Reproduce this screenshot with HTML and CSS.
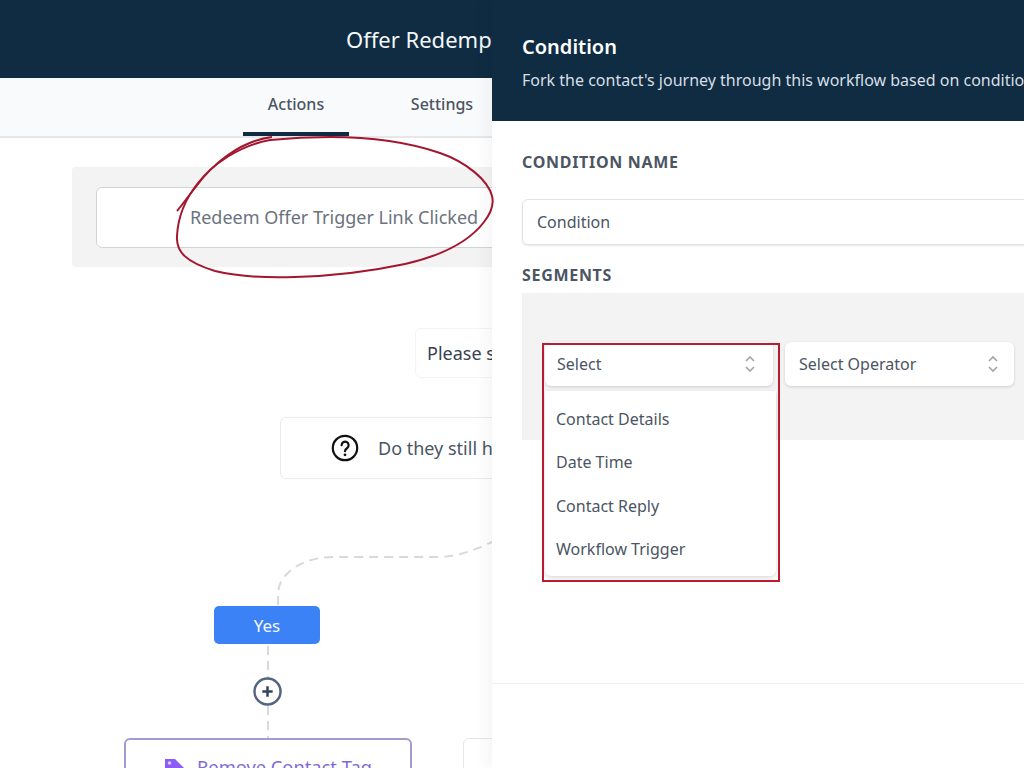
FILE: index.html
```html
<!DOCTYPE html>
<html lang="en">
<head>
<meta charset="utf-8">
<title>Offer Redemption Workflow</title>
<link rel="stylesheet" href="styles.css">
</head>
<body>
<div class="stage">
  <main class="builder">
    <header class="topbar"><h1 class="topbar-title">Offer Redemption Workflow</h1></header>
    <nav class="tabs">
      <a class="tab tab-active">Actions</a>
      <a class="tab">Settings</a>
    </nav>
    <section class="canvas">
      <div class="trigger-zone">
        <div class="trigger-card">Redeem Offer Trigger Link Clicked</div>
      </div>
      <div class="node node-wait">Please select a wait step</div>
      <div class="node node-question">
        <svg class="q-icon" viewBox="0 0 28 28" aria-hidden="true"><circle cx="14" cy="14" r="12.2" fill="none" stroke="#111" stroke-width="2.2"/><path d="M10.600 11.200a3.500 3.500 0 1 1 5.600 2.800c-1.400 1-2.200 1.600-2.200 3.200" fill="none" stroke="#111" stroke-width="2.2" stroke-linecap="round"/><circle cx="14" cy="20.800" r="1.400" fill="#111"/></svg>
        <span>Do they still have the offer available?</span>
      </div>
      <svg class="wires" viewBox="0 0 1024 768" aria-hidden="true">
        <path d="M278 605v-12c1-8 3-14 10-20c10-10 26-16 46-16h105c22-1 38-8 53-15" />
        <path d="M268 646v32M268 706v32" />
      </svg>
      <button class="yes-btn">Yes</button>
      <button class="add-btn" aria-label="Add action">
        <svg viewBox="0 0 28 28" aria-hidden="true"><circle cx="14" cy="14" r="12.6" fill="#fff" stroke="#52667f" stroke-width="2.4"/><path d="M14 9v10M9 14h10" stroke="#33455c" stroke-width="2.4"/></svg>
      </button>
      <div class="node node-action">
        <svg class="tag-icon" viewBox="0 0 22 22" aria-hidden="true"><path d="M0 1h10l12 12-8 8L0 10z" fill="#8b5cf6"/><circle cx="4.500" cy="5" r="1.800" fill="#d9ccfb"/></svg>
        <span>Remove Contact Tag</span>
      </div>
      <div class="node node-ghost"></div>
    </section>
  </main>

  <aside class="panel">
    <header class="panel-head">
      <h2 class="panel-title">Condition</h2>
      <p class="panel-sub">Fork the contact's journey through this workflow based on conditions you define.</p>
    </header>
    <div class="panel-body">
      <h3 class="field-label">CONDITION NAME</h3>
      <div class="text-input">Condition</div>
      <h3 class="field-label field-label-seg">SEGMENTS</h3>
      <div class="segment">
        <div class="select-row">
          <div class="select select-field">
            <span>Select</span>
            <svg class="updown" viewBox="0 0 12 20" aria-hidden="true"><path d="M2 7l4-4 4 4M2 13l4 4 4-4"/></svg>
            <ul class="menu">
              <li>Contact Details</li>
              <li>Date Time</li>
              <li>Contact Reply</li>
              <li>Workflow Trigger</li>
            </ul>
          </div>
          <div class="select select-op">
            <span>Select Operator</span>
            <svg class="updown" viewBox="0 0 12 20" aria-hidden="true"><path d="M2 7l4-4 4 4M2 13l4 4 4-4"/></svg>
          </div>
        </div>
      </div>
      <div class="panel-rule"></div>
    </div>
  </aside>

  <svg class="scribble" viewBox="0 0 1024 768" aria-hidden="true">
    <path d="M272 137C240 141 212 164 195 188C187 198 182 205 177 211"/>
    <path d="M270 140C238 146 212 165 198 183C186 198 178 216 177 236C176 252 186 262 215 271C240 277 265 278 295 277C335 276 372 271 405 264C440 256 468 243 484 222C492 212 494 204 492 196C488 180 466 162 440 153C405 141 370 137 330 137C310 137 290 138 270 140"/>
  </svg>
  <div class="redbox"></div>
</div>
</body>
</html>
```
FILE: styles.css
```css
* { box-sizing: border-box; }
html, body { margin: 0; padding: 0; }
body { font-family: "Noto Sans", "Open Sans", sans-serif; color: #4a5568; background: #fff; }
.stage { position: relative; width: 1024px; height: 768px; overflow: hidden; background: #fff; }

.builder { width: 100%; height: 100%; display: flex; flex-direction: column; }
.topbar { height: 78px; background: #0f2c42; display: flex; align-items: center; flex: none; padding-left: 346px; }
.topbar-title { margin: 0; width: 146px; overflow: hidden; font-size: 22px; font-weight: 400; color: #f4f7f9; white-space: nowrap; }

.tabs { height: 60px; flex: none; background: #f9fafb; border-bottom: 2px solid #e5e7eb; display: flex; gap: 40px; padding-left: 243px; }
.tab { width: 106px; height: 58px; display: flex; align-items: center; justify-content: center; font-size: 16px; font-weight: 500; color: #4b5563; padding-bottom: 6px; }
.tab-active { border-bottom: 4px solid #0f2c42; padding-bottom: 2px; }

.canvas { position: relative; flex: 1; }
.trigger-zone { position: absolute; left: 72px; top: 29px; width: 500px; height: 100px; background: #f3f3f4; border-radius: 4px; padding: 20px 24px; }
.trigger-card { width: 460px; height: 61px; background: #fff; border: 1px solid #cfd4da; border-radius: 6px; font-size: 18px; color: #6b7280; display: flex; align-items: center; padding: 0 0 2px 93px; white-space: nowrap; }

.node { position: absolute; background: #fff; border: 1px solid #f3f4f6; border-radius: 6px; white-space: nowrap; display: flex; align-items: center; font-size: 18px; color: #374151; }
.node-wait { left: 415px; top: 190px; width: 200px; height: 50px; padding-left: 11px; }
.node-question { left: 280px; top: 279px; width: 400px; height: 62px; padding-left: 50px; gap: 19px; border-color: #e9ebee; color: #4b5563; }
.q-icon { width: 28px; height: 28px; flex: none; }
.wires { position: absolute; left: 0; top: -138px; width: 1024px; height: 768px; pointer-events: none; }
.wires path { fill: none; stroke: #d6dade; stroke-width: 2; stroke-dasharray: 9 6; }
.yes-btn { position: absolute; left: 214px; top: 468px; width: 106px; height: 38px; border: 0; border-radius: 5px; background: #3b82f6; color: #f5f9ff; font: 400 17px "Noto Sans", sans-serif; padding: 0; }
.add-btn { position: absolute; left: 253px; top: 539px; width: 29px; height: 29px; padding: 0; border: 0; background: none; }
.add-btn svg { display: block; width: 29px; height: 29px; }
.node-action { left: 124px; top: 600px; width: 288px; height: 62px; border: 2px solid #a29bd0; color: #7f6bd8; padding: 14px 0 0 39px; align-items: flex-start; gap: 10px; font-size: 18.300px; }
.tag-icon { width: 22px; height: 22px; flex: none; margin-top: 4px; }
.node-ghost { left: 463px; top: 600px; width: 100px; height: 62px; border-color: #e5e7eb; }

.panel { position: absolute; left: 492px; top: 0; bottom: 0; width: 560px; background: #fff; box-shadow: -8px 0 12px rgba(0,0,0,.035); }
.panel-head { height: 121px; background: #0f2c42; padding: 33px 30px 0; }
.panel-title { margin: 0; font-size: 20px; line-height: 28px; font-weight: 600; color: #fff; }
.panel-sub { margin: 6px 0 0; font-size: 16px; line-height: 26px; color: #d7dfe6; white-space: nowrap; }
.panel-body { padding: 0 0 0 30px; }
.field-label { margin: 30px 0 0; font-size: 16px; line-height: 22px; font-weight: 700; color: #4b5563; letter-spacing: .7px; }
.text-input { margin-top: 26px; height: 46px; border: 1px solid #e0e3e7; border-radius: 6px; box-shadow: 0 1px 2px rgba(0,0,0,.1); padding-left: 14px; display: flex; align-items: center; font-size: 16px; color: #4b5563; }
.field-label-seg { margin-top: 19px; }
.segment { margin-top: 7px; height: 147px; background: #f3f3f4; padding: 49px 0 0 23px; }
.select-row { display: flex; gap: 12px; }
.select { position: relative; height: 44px; background: #fff; border-radius: 6px; box-shadow: 0 1px 3px rgba(0,0,0,.16); display: flex; align-items: center; justify-content: space-between; font-size: 16px; color: #4b5563; }
.select-field { width: 228px; padding: 0 17px 0 12px; }
.select-op { width: 229px; padding: 0 15px 0 14px; }
.updown { width: 12px; height: 20px; flex: none; }
.updown path { fill: none; stroke: #a0a6ae; stroke-width: 1.600; }
.menu { list-style: none; margin: 0; padding: 6px 0 5px; position: absolute; left: 0; top: 49px; width: 231px; background: #fff; box-shadow: 0 2px 4px rgba(0,0,0,.14); border-radius: 0 0 6px 6px; }
.menu li { height: 43.500px; display: flex; align-items: center; padding-left: 11px; }
.panel-rule { margin: 243px 0 0 -30px; height: 1px; background: #eef0f2; }

.scribble { position: absolute; inset: 0; width: 1024px; height: 768px; pointer-events: none; }
.scribble path { fill: none; stroke: #a3162e; stroke-width: 2; }
.redbox { position: absolute; left: 542px; top: 343px; width: 238px; height: 239px; border: 2px solid #b91c2e; pointer-events: none; }
```
